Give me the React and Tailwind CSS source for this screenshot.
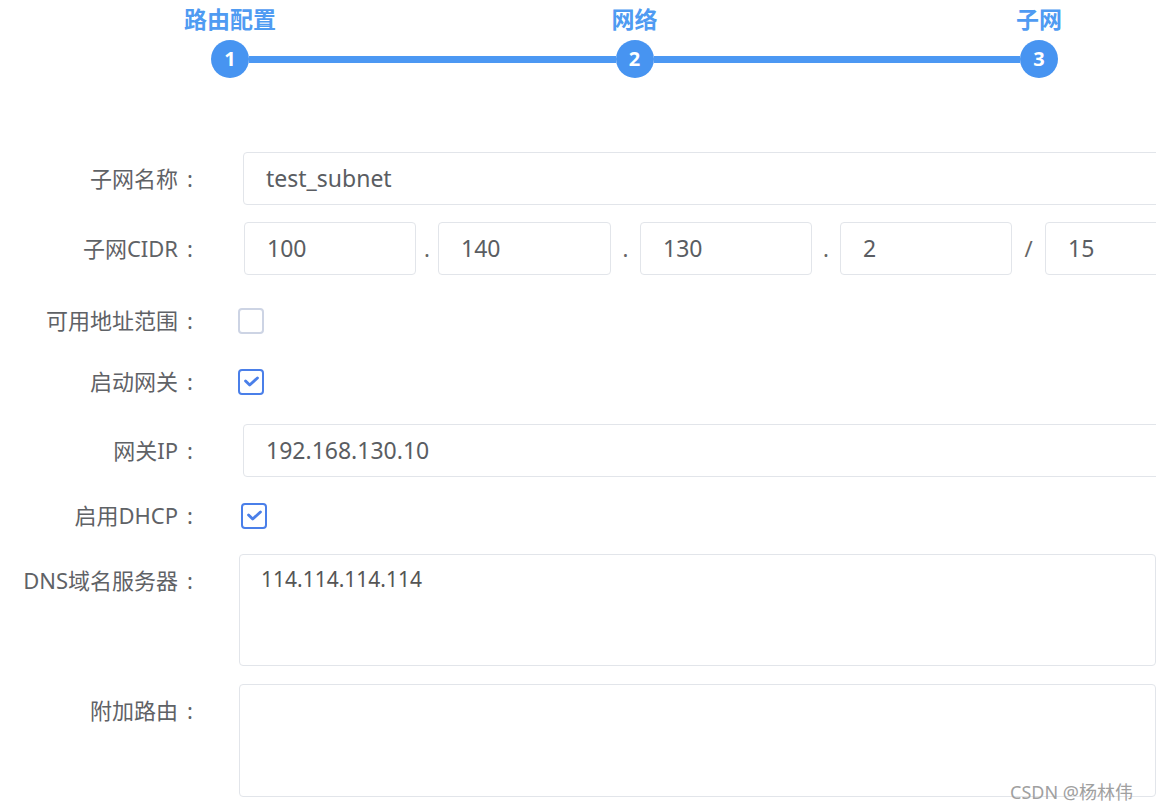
import React from 'react';

const FONT = { fontFamily: '"Noto Sans", "Noto Sans CJK SC", sans-serif' };

/**
 * Stepper header — three finished steps joined by a bar.
 */
function Stepper() {
  const steps = ['路由配置', '网络', '子网'];
  return (
    <div className="ml-[211px] w-[847px] pt-[4px]">
      <div className="flex justify-between">
        {steps.map((s) => (
          <div key={s} className="w-[38px] flex justify-center">
            <span className="whitespace-nowrap text-[23px] leading-[30px] font-bold text-[#4f9bf2]">{s}</span>
          </div>
        ))}
      </div>
      <div className="flex items-center mt-[6px]">
        {steps.map((s, i) => (
          <React.Fragment key={s}>
            <div className="w-[38px] h-[38px] rounded-full bg-[#4794f1] flex items-center justify-center text-white text-[20px] font-bold shrink-0">
              {i + 1}
            </div>
            {i < steps.length - 1 && <div className="flex-1 h-[7px] bg-[#4c98f3]" />}
          </React.Fragment>
        ))}
      </div>
    </div>
  );
}

function Label({ children }) {
  return (
    <div className="w-[193px] shrink-0 h-[53px] flex items-center justify-end text-[22px] text-[#5f6266]">
      <span className="whitespace-nowrap">{children}</span>
      <span className="w-[15px] text-right">:</span>
    </div>
  );
}

function TextBox({ value, className = '' }) {
  return (
    <div className={`h-[53px] border border-[#e2e5ea] rounded-[4px] bg-white flex items-center pl-[22px] text-[23px] text-[#5a5d62] shrink-0 ${className}`}>
      {value}
    </div>
  );
}

function Checkbox({ checked, className = '' }) {
  return (
    <div
      className={`w-[26px] h-[26px] rounded-[4px] border-2 bg-white flex items-center justify-center ${
        checked ? 'border-[#4a7fe9]' : 'border-[#cdd4e4]'
      } ${className}`}
    >
      {checked && (
        <svg viewBox="0 0 16 16" className="w-[19px] h-[19px]" fill="none" stroke="#4a7fe9" strokeWidth={2.4} strokeLinecap="round" strokeLinejoin="round">
          <path d="M3 7.5l3.5 3.5 6.5-6" />
        </svg>
      )}
    </div>
  );
}

function Sep({ children, w }) {
  return <div className={`${w} shrink-0 flex justify-center text-[22px] text-[#666]`}>{children}</div>;
}

export default function App() {
  return (
    <div className="relative w-[1156px] h-[810px] overflow-hidden bg-white" style={FONT}>
      <Stepper />

      <div className="flex flex-col">
        {/* 子网名称 */}
        <div className="flex mt-[74px]">
          <Label>子网名称</Label>
          <TextBox value="test_subnet" className="ml-[50px] w-[960px]" />
        </div>

        {/* 子网CIDR */}
        <div className="flex items-center mt-[17px]">
          <Label>子网CIDR</Label>
          <TextBox value="100" className="ml-[51px] w-[172px]" />
          <Sep w="w-[22px]">.</Sep>
          <TextBox value="140" className="w-[173px]" />
          <Sep w="w-[29px]">.</Sep>
          <TextBox value="130" className="w-[172px]" />
          <Sep w="w-[28px]">.</Sep>
          <TextBox value="2" className="w-[172px]" />
          <Sep w="w-[33px]">/</Sep>
          <TextBox value="15" className="w-[172px]" />
        </div>

        {/* 可用地址范围 */}
        <div className="flex items-center mt-[19px] h-[53px]">
          <Label>可用地址范围</Label>
          <Checkbox className="ml-[45px]" />
        </div>

        {/* 启动网关 */}
        <div className="flex items-center mt-[8px] h-[53px]">
          <Label>启动网关</Label>
          <Checkbox checked className="ml-[45px]" />
        </div>

        {/* 网关IP */}
        <div className="flex mt-[16px]">
          <Label>网关IP</Label>
          <TextBox value="192.168.130.10" className="ml-[50px] w-[960px]" />
        </div>

        {/* 启用DHCP */}
        <div className="flex items-center mt-[12px] h-[53px]">
          <Label>启用DHCP</Label>
          <Checkbox checked className="ml-[48px]" />
        </div>

        {/* DNS域名服务器 */}
        <div className="flex mt-[12px]">
          <Label>DNS域名服务器</Label>
          <div className="ml-[46px] w-[960px] h-[112px] border border-[#e2e5ea] rounded-[4px] pl-[21px] pt-[9px] text-[21px] text-[#555] leading-[30px]">
            114.114.114.114
          </div>
        </div>

        {/* 附加路由 */}
        <div className="flex mt-[18px]">
          <Label>附加路由</Label>
          <div className="ml-[46px] w-[960px] h-[113px] border border-[#e2e5ea] rounded-[4px]" />
        </div>
      </div>

      {/* watermark */}
      <div className="absolute left-[1010px] top-[779px] text-[18px] text-[#a0a0a0] whitespace-nowrap">
        CSDN @杨林伟
      </div>
    </div>
  );
}
